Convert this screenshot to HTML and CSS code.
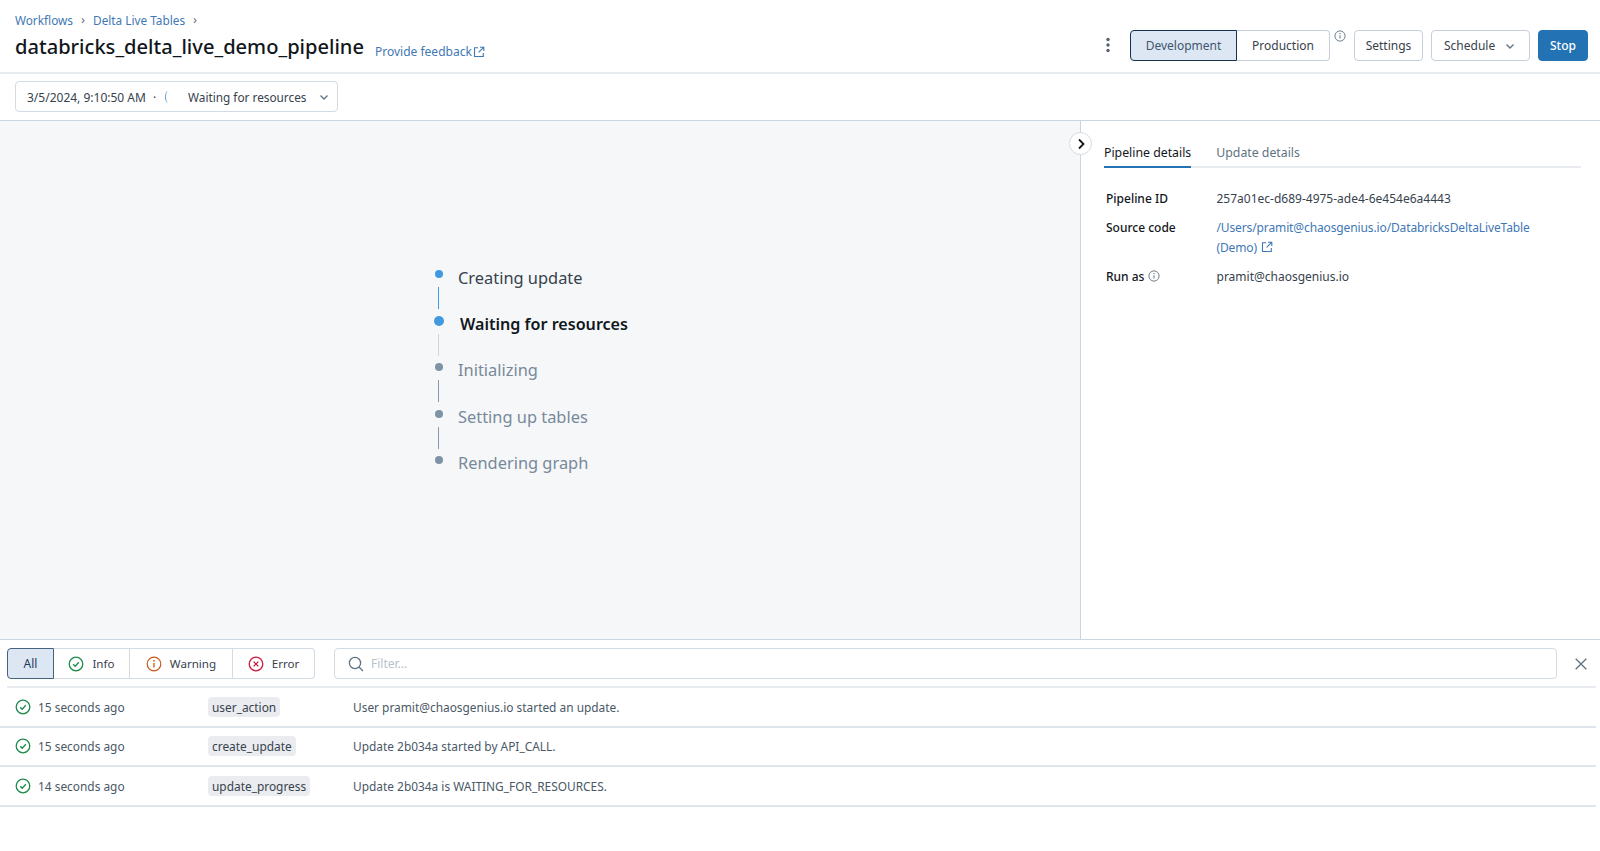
FILE: index.html
```html
<!DOCTYPE html>
<html lang="en">
<head>
<meta charset="utf-8">
<title>databricks_delta_live_demo_pipeline</title>
<link rel="stylesheet" href="styles.css">
</head>
<body>
<svg class="defs" width="0" height="0" aria-hidden="true">
  <symbol id="ext" viewBox="0 0 12 12"><path d="M5 1.7H1.5v8.8h8.8V7M7 1.2h3.8V5M10.6 1.4 5.6 6.4" fill="none" stroke="currentColor" stroke-width="1.1"/></symbol>
  <symbol id="ok" viewBox="0 0 16 16"><circle cx="8" cy="8" r="6.8" fill="none" stroke="currentColor" stroke-width="1.3"/><path d="M5.2 8.2 7.2 10.2 10.8 6.2" fill="none" stroke="currentColor" stroke-width="1.3"/></symbol>
  <symbol id="info" viewBox="0 0 16 16"><circle cx="8" cy="8" r="6.8" fill="none" stroke="currentColor" stroke-width="1.2"/><path d="M8 7v4.4" stroke="currentColor" stroke-width="1.3"/><circle cx="8" cy="4.8" r=".9" fill="currentColor"/></symbol>
  <symbol id="chev" viewBox="0 0 12 12"><path d="M2.5 4.5 6 8l3.5-3.5" fill="none" stroke="currentColor" stroke-width="1.3"/></symbol>
</svg>
<header class="head">
  <div class="head-left">
    <nav class="crumbs"><a>Workflows</a><span class="sep">›</span><a>Delta Live Tables</a><span class="sep">›</span></nav>
    <div class="title-row">
      <h1 class="title">databricks_delta_live_demo_pipeline</h1>
      <a class="feedback">Provide feedback<svg class="ext"><use href="#ext"/></svg></a>
    </div>
  </div>
  <div class="actions">
    <svg class="kebab" viewBox="0 0 4 16" width="4" height="16"><circle cx="2" cy="2.5" r="1.7"/><circle cx="2" cy="8" r="1.7"/><circle cx="2" cy="13.5" r="1.7"/></svg>
    <div class="seg">
      <button class="btn seg-on">Development</button>
      <button class="btn seg-off">Production</button>
    </div>
    <svg class="seg-info"><use href="#info"/></svg>
    <button class="btn plain settings">Settings</button>
    <button class="btn plain schedule">Schedule<svg class="chev"><use href="#chev"/></svg></button>
    <button class="btn stop">Stop</button>
  </div>
</header>
<div class="bar">
  <div class="select">
    <span class="select-date">3/5/2024, 9:10:50 AM</span>
    <span class="dot-sep">·</span>
    <span class="spin"></span>
    <span class="select-state">Waiting for resources</span>
    <svg class="chev"><use href="#chev"/></svg>
  </div>
</div>
<main class="main">
  <section class="canvas">
    <ol class="steps">
      <li class="step done"><div class="rail"><i class="dot"></i><i class="line"></i></div><span class="label">Creating update</span></li>
      <li class="step current"><div class="rail"><i class="dot"></i><i class="line"></i></div><span class="label">Waiting for resources</span></li>
      <li class="step"><div class="rail"><i class="dot"></i><i class="line"></i></div><span class="label">Initializing</span></li>
      <li class="step"><div class="rail"><i class="dot"></i><i class="line"></i></div><span class="label">Setting up tables</span></li>
      <li class="step"><div class="rail"><i class="dot"></i></div><span class="label">Rendering graph</span></li>
    </ol>
  </section>
  <aside class="panel">
    <button class="toggle"><svg viewBox="0 0 12 12" width="12" height="12"><path d="M4 1.5 8.5 6 4 10.5" fill="none" stroke="#11171c" stroke-width="1.8"/></svg></button>
    <div class="tabs"><span class="tab tab-on">Pipeline details</span><span class="tab">Update details</span></div>
    <dl class="details">
      <dt>Pipeline ID</dt><dd>257a01ec-d689-4975-ade4-6e454e6a4443</dd>
      <dt>Source code</dt><dd><a>/Users/pramit@chaosgenius.io/DatabricksDeltaLiveTable (Demo)<svg class="ext ext-b"><use href="#ext"/></svg></a></dd>
      <dt>Run as<svg class="run-info"><use href="#info"/></svg></dt><dd>pramit@chaosgenius.io</dd>
    </dl>
  </aside>
</main>
<section class="logs">
  <div class="filters">
    <div class="levels">
      <button class="lvl lvl-on">All</button>
      <button class="lvl"><svg class="ic green"><use href="#ok"/></svg>Info</button>
      <button class="lvl"><svg class="ic orange"><use href="#info"/></svg>Warning</button>
      <button class="lvl"><svg class="ic red" viewBox="0 0 16 16"><circle cx="8" cy="8" r="6.8" fill="none" stroke="currentColor" stroke-width="1.3"/><path d="M5.6 5.6l4.8 4.8M10.4 5.6l-4.8 4.8" stroke="currentColor" stroke-width="1.3"/></svg>Error</button>
    </div>
    <div class="search">
      <svg viewBox="0 0 16 16" width="16" height="16"><circle cx="7" cy="7" r="5.6" fill="none" stroke="#5f7281" stroke-width="1.3"/><path d="M11 11l4 4" stroke="#5f7281" stroke-width="1.3"/></svg>
      <span>Filter...</span>
    </div>
    <svg class="close" viewBox="0 0 12 12" width="12" height="12"><path d="M.7.7l10.6 10.6M11.3.7.7 11.3" stroke="#5f7281" stroke-width="1.3"/></svg>
  </div>
  <ul class="rows">
    <li class="row"><svg class="ic green"><use href="#ok"/></svg><span class="time">15 seconds ago</span><span class="tag-cell"><span class="tag">user_action</span></span><span>User pramit@chaosgenius.io started an update.</span></li>
    <li class="row"><svg class="ic green"><use href="#ok"/></svg><span class="time">15 seconds ago</span><span class="tag-cell"><span class="tag">create_update</span></span><span>Update 2b034a started by API_CALL.</span></li>
    <li class="row"><svg class="ic green"><use href="#ok"/></svg><span class="time">14 seconds ago</span><span class="tag-cell"><span class="tag">update_progress</span></span><span>Update 2b034a is WAITING_FOR_RESOURCES.</span></li>
  </ul>
</section>
</body>
</html>
```
FILE: styles.css
```css
* { box-sizing: border-box; }
html, body { height: 100%; }
body {
  margin: 0;
  height: 851px;
  overflow: hidden;
  display: flex;
  flex-direction: column;
  background: #fff;
  color: #11171c;
  font-family: "Noto Sans", "Open Sans", sans-serif;
  font-size: 12px;
}
.defs { position: absolute; }
a { color: #2f72b5; }
button { font: inherit; cursor: pointer; }
ol, ul { list-style: none; margin: 0; padding: 0; }

.head {
  height: 74px;
  flex: none;
  display: flex;
  justify-content: space-between;
  padding: 12px 12px 0 15px;
  border-bottom: 2px solid #e8ecf0;
}
.crumbs { display: flex; align-items: center; gap: 8px; height: 15px; font-size: 11.8px; color: #5f7281; }
.crumbs a { color: #3f78b5; }
.sep { font-size: 13px; line-height: 13px; }
.title-row { display: flex; align-items: center; margin-top: 5px; gap: 11px; }
.title { margin: 0; font-size: 20.1px; line-height: 30px; font-weight: 500; color: #11171c; }
.feedback { margin-top: 9px; font-size: 12px; color: #3f78b5; display: inline-flex; align-items: center; }
.ext { width: 12px; height: 12px; margin-left: 1px; }
.actions { display: flex; align-items: flex-start; padding-top: 18px; }
.kebab { fill: #55616d; margin: 7px 20px 0 0; }
.btn { height: 31px; padding: 0; border-radius: 4px; background: #fff; color: #37424d; font-size: 12px; border: 1px solid #c5d0dc; }
.seg { display: flex; }
.seg-on { width: 107px; background: #dce7f3; border: 1px solid #17324f; border-radius: 4px 0 0 4px; color: #41566e; }
.seg-off { width: 93px; border-left: 0; border-radius: 0 4px 4px 0; }
.seg-info { width: 12px; height: 12px; margin: 0 8px 0 4px; color: #5f7281; }
.plain { margin-right: 8px; }
.settings { width: 69px; }
.schedule { width: 99px; display: flex; align-items: center; padding-left: 12px; gap: 9px; }
.chev { width: 12px; height: 12px; color: #5f7281; flex: none; }
.stop { width: 50px; background: #2272b4; border-color: #2272b4; color: #fff; font-weight: 500; }

.bar { height: 47px; flex: none; padding: 7px 15px 0; border-bottom: 1px solid #cbd5e1; }
.select {
  width: 323px;
  height: 31px;
  display: flex;
  align-items: center;
  padding: 0 7px 0 11px;
  border: 1px solid #d3dbe4;
  border-radius: 4px;
  font-size: 11.8px;
  color: #37424d;
}
.select-date { font-size: 12px; margin-top: 2px; }
.dot-sep { margin: 0 9px 0 7px; }
.spin { width: 6px; height: 12px; border-left: 1.5px solid #2272b4; border-radius: 50%; flex: none; opacity: .7; }
.select-state { margin-left: 17px; flex: 1; }

.main { height: 518px; flex: none; display: flex; }
.canvas { flex: 1; background: #f5f7f9; padding: 149px 0 0 430px; }
.step { display: flex; height: 46.5px; color: #78899a; }
.rail { width: 17px; display: flex; flex-direction: column; align-items: center; flex: none; }
.dot { width: 8px; height: 8px; border-radius: 50%; background: #7f93a6; flex: none; }
.line { width: 1px; height: 22px; margin-top: 9px; background: #8899a8; flex: none; }
.label { font-size: 16.4px; line-height: 23px; margin: -5px 0 0 11px; }
.done { color: #37424d; }
.done .label { margin-top: -4px; }
.done .dot { background: #4299e0; }
.done .line { background: #4299e0; }
.current { color: #11171c; }
.current .dot { width: 10px; height: 10px; margin-top: -1px; background: #4299e0; }
.current .line { margin-top: 8px; background: #cfd5da; }
.current .label { font-size: 16.1px; font-weight: 600; margin: -4px 0 0 13px; }

.panel { position: relative; width: 520px; flex: none; border-left: 1px solid #cbd5e1; padding: 20px 19px 0 23px; }
.toggle {
  position: absolute;
  left: -12px;
  top: 11px;
  width: 23px;
  height: 23px;
  padding: 0;
  display: flex;
  align-items: center;
  justify-content: center;
  border: 1px solid #d3dbe4;
  border-radius: 50%;
  background: #fff;
}
.tabs { display: flex; gap: 25px; height: 27px; border-bottom: 2px solid #e8ecf0; }
.tab { height: 27px; color: #5f7281; font-size: 12.3px; line-height: 24px; }
.tab-on { color: #11171c; border-bottom: 2px solid #2272b4; }
.details {
  margin: 21px 0 0 2px;
  display: grid;
  grid-template-columns: 110.5px 1fr;
  row-gap: 9.5px;
  line-height: 19.5px;
}
.details dt { font-weight: 500; color: #11171c; display: flex; align-items: center; height: 19.5px; }
.details dd { margin: 0; color: #37424d; max-width: 330px; }
.details a { color: #3f78b5; letter-spacing: -.12px; }
.ext-b { vertical-align: -1px; margin-left: 4px; }
.run-info { width: 12px; height: 12px; margin-left: 4px; color: #5f7281; }

.logs { flex: 1; border-top: 1px solid #cbd5e1; padding: 8px 0 0 7px; }
.filters { display: flex; align-items: center; height: 31px; }
.levels { display: flex; width: 308px; flex: none; }
.lvl {
  height: 31px;
  display: flex;
  align-items: center;
  justify-content: center;
  gap: 8px;
  padding: 0;
  border: 1px solid #d3dbe4;
  border-left: 0;
  background: #fff;
  color: #37424d;
  font-size: 11.6px;
}
.lvl:nth-child(1) { width: 47px; background: #dce7f3; border: 1px solid #45627f; border-radius: 4px 0 0 4px; color: #1d3b5b; font-size: 12px; }
.lvl:nth-child(2) { width: 76px; }
.lvl:nth-child(3) { width: 103px; }
.lvl:nth-child(4) { width: 82px; border-radius: 0 4px 4px 0; }
.ic { width: 16px; height: 16px; flex: none; }
.green { color: #1f8a4c; }
.orange { color: #c9561a; }
.red { color: #c81e3f; }
.search {
  width: 1223px;
  height: 31px;
  margin-left: 19px;
  display: flex;
  align-items: center;
  gap: 7px;
  padding-left: 13px;
  border: 1px solid #d3dbe4;
  border-radius: 4px;
  color: #b8c2cc;
}
.close { margin-left: 18px; flex: none; }
.rows { margin-top: 7px; margin-right: 4px; border-top: 2px solid #e8ecf0; font-size: 11.9px; }
.row {
  display: flex;
  align-items: center;
  height: 39.6px;
  margin-left: -7px;
  padding-left: 15px;
  border-bottom: 2px solid #dfe5ec;
  color: #4a5866;
}
.time { width: 170px; margin-left: 7px; }
.tag-cell { width: 145px; }
.tag { background: #eaecf0; border-radius: 4px; padding: 2px 4px; color: #37424d; }
```
